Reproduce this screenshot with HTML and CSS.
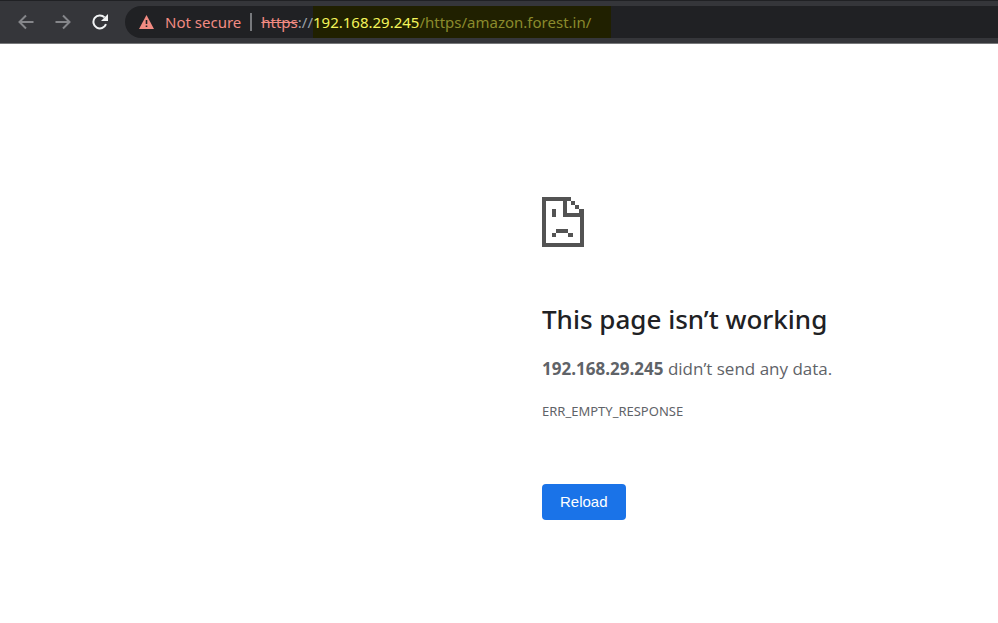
FILE: index.html
```
<!DOCTYPE html>
<html lang="en">
<head>
  <meta charset="UTF-8">
  <meta name="viewport" content="width=device-width, initial-scale=1">
  <title>192.168.29.245</title>
  <link rel="stylesheet" href="styles.css">
</head>
<body>

  <header class="toolbar">
    <nav class="nav-buttons">
      <button type="button" class="nav-button" aria-label="Back">
        <svg width="16" height="16" viewBox="0 0 16 16"><path d="M15.5 8H1.5M8 1.5L1.5 8L8 14.5"/></svg>
      </button>
      <button type="button" class="nav-button" aria-label="Forward">
        <svg width="16" height="16" viewBox="0 0 16 16"><path d="M.5 8H14.5M8 1.5L14.5 8L8 14.5"/></svg>
      </button>
      <button type="button" class="nav-button active" aria-label="Reload this page">
        <svg width="16" height="16" viewBox="0 0 16 16"><path d="M14 10.2A6.5 6.5 0 1 1 12.6 3.4"/><path class="fill" d="M16 0V7H9Z"/></svg>
      </button>
    </nav>
    <div class="address-bar">
      <button type="button" class="security">
        <svg width="15" height="14" viewBox="0 0 15 14"><path d="M7.5 0L15 14H0Z"/><path class="mark" d="M6.7 5h1.6v4H6.7zM6.7 10.4h1.6V12H6.7z"/></svg>
        Not secure
      </button>
      <span class="divider"></span>
      <div class="url"><s>https</s>://<span class="highlight"><b>192.168.29.245</b>/https/amazon.forest.in/</span></div>
    </div>
  </header>

  <main class="error-page">
    <svg class="sad-page" width="42" height="50" viewBox="0 0 42 50" aria-hidden="true">
      <path d="M0 0h29v4H4v42h34V20H21V0h4v16h17v34H0zM29 4h4v4h-4zM33 8h4v4h-4zM37 12h5v4h-5zM10 12h4v8h-4zM14 32h12v4H14zM10 36h4v4h-4zM26 36h5v4h-5z"/>
    </svg>
    <h1>This page isn’t working</h1>
    <p><strong>192.168.29.245</strong> didn’t send any data.</p>
    <div class="error-code">ERR_EMPTY_RESPONSE</div>
    <button type="button" class="reload">Reload</button>
  </main>

</body>
</html>
```

FILE: styles.css
```
body {
  margin: 0;
  background-color: #fff;
  color: #5f6368;
  font-family: "Open Sans", "Noto Sans", sans-serif;
}
button {
  border: none;
  padding: 0;
  cursor: pointer;
}
svg {
  display: block;
}

/* browser toolbar */
.toolbar {
  display: flex;
  align-items: center;
  height: 36px;
  padding: 3px 0 3px 18px;
  background-color: #35363a;
  border-top: 1px solid #202124;
  border-bottom: 1px solid #77787a;
}
.nav-buttons {
  display: flex;
  gap: 21px;
  margin-right: 17px;
}
.nav-button {
  background: none;
}
.nav-button path {
  fill: none;
  stroke: #85868a;
  stroke-width: 2;
}
.nav-button.active path {
  stroke: #f1f3f4;
}
.nav-button.active .fill {
  fill: #f1f3f4;
  stroke: none;
}
.address-bar {
  flex: 1;
  display: flex;
  align-items: center;
  height: 32px;
  padding-left: 14px;
  border-radius: 16px 0 0 16px;
  background-color: #202124;
  font-family: "Noto Sans", "Open Sans", sans-serif;
  font-size: 15px;
  line-height: 32px;
  white-space: nowrap;
}
.security {
  display: flex;
  align-items: center;
  gap: 11px;
  background: none;
  color: #f28b82;
  font: inherit;
}
.security path {
  fill: #f28b82;
}
.security .mark {
  fill: #202124;
}
.divider {
  width: 2px;
  height: 18px;
  margin: 0 9px;
  background-color: #77797c;
}
.url {
  color: #9aa0a6;
}
.url s {
  color: #f28b82;
}
.highlight {
  display: inline-block;
  padding-right: 20px;
  background-color: #202000;
  color: #8b8b2c;
}
.highlight b {
  color: #f4f45a;
  font-weight: 400;
}

/* error message */
.error-page {
  max-width: 456px;
  margin-left: auto;
  padding-top: 153px;
}
.sad-page {
  fill: #535353;
}
h1 {
  margin: 52px 0 16px;
  color: #202124;
  font-family: "Noto Sans", "Open Sans", sans-serif;
  font-size: 26px;
  font-weight: 500;
  line-height: 40px;
}
p {
  margin: 0;
  font-size: 17px;
  line-height: 28px;
}
.error-code {
  margin-top: 16px;
  font-family: "Noto Sans", "Open Sans", sans-serif;
  font-size: 13px;
  line-height: 24px;
}
.reload {
  margin-top: 61px;
  padding: 0 18px;
  border-radius: 4px;
  background-color: #1a73e8;
  color: #fff;
  font-family: "Liberation Sans", Arial, sans-serif;
  font-size: 15px;
  line-height: 36px;
}
```
